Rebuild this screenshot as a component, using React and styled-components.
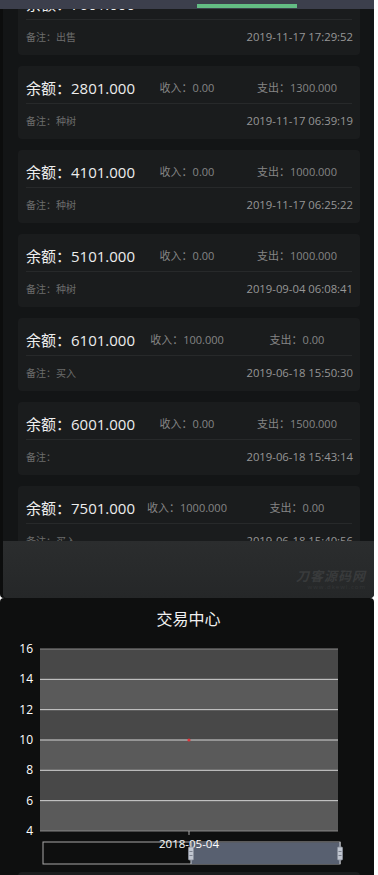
import styled, { createGlobalStyle } from "styled-components"

const GlobalStyle = createGlobalStyle`
  html, body {
    margin: 0;
    padding: 0;
    background: #ffffff;
    overflow: hidden;
  }
  body {
    font-family: "Open Sans", "Noto Sans CJK SC", sans-serif;
  }
`

const records = [
  { balance: "7601.000", income: "0.00", expense: "100.000", note: "出售", time: "2019-11-17 17:29:52" },
  { balance: "2801.000", income: "0.00", expense: "1300.000", note: "种树", time: "2019-11-17 06:39:19" },
  { balance: "4101.000", income: "0.00", expense: "1000.000", note: "种树", time: "2019-11-17 06:25:22" },
  { balance: "5101.000", income: "0.00", expense: "1000.000", note: "种树", time: "2019-09-04 06:08:41" },
  { balance: "6101.000", income: "100.000", expense: "0.00", note: "买入", time: "2019-06-18 15:50:30" },
  { balance: "6001.000", income: "0.00", expense: "1500.000", note: "", time: "2019-06-18 15:43:14" },
  { balance: "7501.000", income: "1000.000", expense: "0.00", note: "买入", time: "2019-06-18 15:40:56" },
]

const Page = styled.div`
  width: 374px;
  height: 875px;
  overflow: hidden;
  display: flex;
  flex-direction: column;
`
const TopBar = styled.div`
  width: 378px;
  height: 9px;
  flex-shrink: 0;
  background: #3c3f4c;
  position: relative;
  z-index: 2;
`
const Indicator = styled.div`
  position: absolute;
  left: 197px;
  top: 4px;
  width: 100px;
  height: 4px;
  background: #63bb84;
`
const ListViewport = styled.div`
  position: relative;
  height: 589px;
  flex-shrink: 0;
  overflow: hidden;
  background: #131516;
  border-left: 3px solid #0c0d0d;
  border-radius: 0 0 4px 4px;
`
const List = styled.div`
  display: flex;
  flex-direction: column;
  gap: 11px;
  padding: 0 14px 0 15px;
  margin-top: -27px;
`
const Card = styled.div`
  background: #1a1c1d;
  border-radius: 4px;
  padding: 0 8px;
  height: 73px;
  box-sizing: border-box;
`
const TopRow = styled.div`
  display: grid;
  grid-template-columns: 106px 1fr 1fr;
  align-items: center;
  height: 38px;
  padding-top: 5px;
  box-sizing: border-box;
  border-bottom: 1px solid #27292a;
`
const Balance = styled.div`
  font-size: 15px;
  color: #ededed;
  white-space: nowrap;
`
const Flow = styled.div`
  font-size: 11px;
  color: #858585;
  text-align: center;
  white-space: nowrap;
`
const BottomRow = styled.div`
  display: flex;
  justify-content: space-between;
  align-items: center;
  height: 33px;
`
const Note = styled.div`
  font-size: 10px;
  color: #6c6c6c;
`
const Time = styled.div`
  font-size: 11.3px;
  color: #969696;
  margin-right: -1px;
`
const Shade = styled.div`
  position: absolute;
  left: 0;
  right: 0;
  bottom: 0;
  height: 57px;
  background: linear-gradient(#2b2d2e, #252728);
  border-radius: 0 0 4px 4px;
  display: flex;
  flex-direction: column;
  align-items: flex-end;
  justify-content: flex-end;
  gap: 1px;
  padding: 0 8px 7px 0;
  box-sizing: border-box;
`
const Watermark = styled.div`
  font-family: "Noto Sans CJK SC", sans-serif;
  font-size: 13px;
  font-weight: 700;
  font-style: italic;
  color: #393b3c;
  line-height: 14px;
  letter-spacing: 1px;
`
const WatermarkUrl = styled.div`
  font-size: 6px;
  color: #343637;
  line-height: 7px;
  letter-spacing: 1px;
`
const ChartPanel = styled.div`
  flex: 1;
  background: #0e0f0f;
  border-radius: 4px 4px 0 0;
  padding: 9px 0 0 3px;
  display: flex;
  flex-direction: column;
`
const ChartTitle = styled.div`
  font-family: "Noto Sans CJK SC", sans-serif;
  text-align: center;
  font-size: 16px;
  line-height: 22px;
  color: #f0f0f0;
`
const ChartBox = styled.div`
  height: 236px;
  margin-top: 7px;
  svg {
    display: block;
  }
`
const NextCard = styled.div`
  margin: 0 14px 0 15px;
  height: 20px;
  background: #1a1c1d;
  border-radius: 4px 4px 0 0;
`

function Record({ r }) {
  return (
    <Card>
      <TopRow>
        <Balance>余额：{r.balance}</Balance>
        <Flow>收入：{r.income}</Flow>
        <Flow>支出：{r.expense}</Flow>
      </TopRow>
      <BottomRow>
        <Note>备注：{r.note}</Note>
        <Time>{r.time}</Time>
      </BottomRow>
    </Card>
  )
}

function Chart() {
  const left = 37
  const right = 335
  const top = 13
  const step = 30.33
  const labels = [16, 14, 12, 10, 8, 6, 4]
  return (
    <svg width="371" height="236">
      {labels.slice(0, 6).map((v, i) => (
        <rect key={v} x={left} y={top + i * step} width={right - left} height={step} fill={i % 2 ? "#5a5a5a" : "#484848"} />
      ))}
      {labels.map((v, i) => (
        <g key={v}>
          <line x1={left} x2={right} y1={top + i * step} y2={top + i * step} stroke={i === 0 || i === 6 ? "#8a8a8a" : "#d6d6d6"} strokeWidth="1" />
          <text x="30" y={top + i * step + 4} fill="#ffffff" fontSize="12" textAnchor="end" fontFamily="Open Sans, sans-serif">{v}</text>
        </g>
      ))}
      <line x1="186" x2="186" y1={top + 6 * step} y2={top + 6 * step + 4} stroke="#aaaaaa" />
      <circle cx="186" cy={top + 3 * step} r="1.6" fill="#e0343a" />
      <rect x="40" y="206" width="297" height="22" fill="none" stroke="#a8a8a8" strokeWidth="1" />
      <rect x="188" y="206.5" width="149" height="21.5" fill="#586070" />
      <text x="186" y="212" fill="#ffffff" fontSize="11.5" textAnchor="middle" fontFamily="Open Sans, sans-serif">2018-05-04</text>
      {[188, 337].map(x => (
        <g key={x}>
          <line x1={x} x2={x} y1="206" y2="228" stroke="#c8ccd4" />
          <rect x={x - 2.5} y="211" width="5" height="13" rx="1" fill="#c0c6d0" stroke="#8a909c" strokeWidth="0.8" />
          <line x1={x - 1.5} x2={x + 1.5} y1="215.5" y2="215.5" stroke="#6a707c" strokeWidth="0.8" />
          <line x1={x - 1.5} x2={x + 1.5} y1="219.5" y2="219.5" stroke="#6a707c" strokeWidth="0.8" />
        </g>
      ))}
    </svg>
  )
}

export default function App() {
  return (
    <>
      <GlobalStyle />
      <Page>
        <TopBar>
          <Indicator />
        </TopBar>
        <ListViewport>
          <List>
            {records.map((r, i) => (
              <Record key={i} r={r} />
            ))}
          </List>
          <Shade>
            <Watermark>刀客源码网</Watermark>
            <WatermarkUrl>www.dkewl.com</WatermarkUrl>
          </Shade>
        </ListViewport>
        <ChartPanel>
          <ChartTitle>交易中心</ChartTitle>
          <ChartBox>
            <Chart />
          </ChartBox>
          <NextCard />
        </ChartPanel>
      </Page>
    </>
  )
}
